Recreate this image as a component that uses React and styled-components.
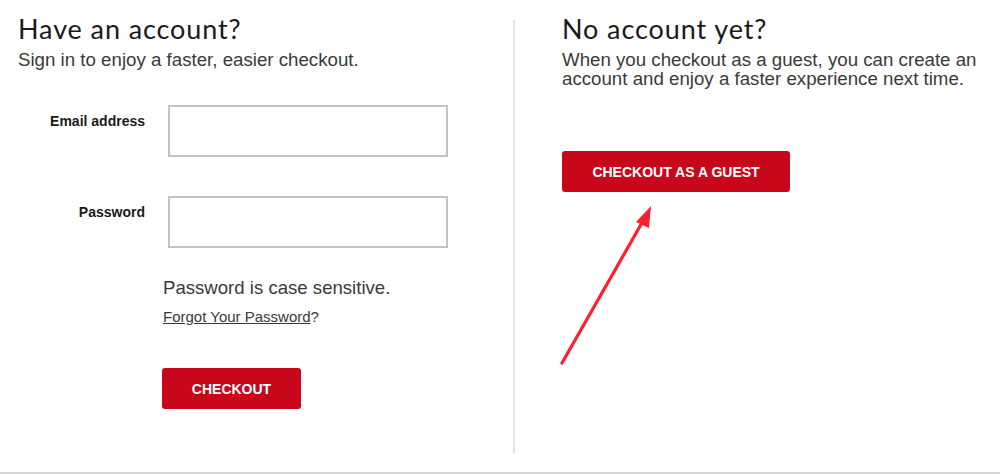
import React from 'react'
import styled, { createGlobalStyle } from 'styled-components';

const GlobalStyle = createGlobalStyle`
  html, body {
    margin: 0;
    padding: 0;
    background: #fff;
  }
  body {
    font-family: "Liberation Sans", Arial, sans-serif;
    color: #333;
  }
`;

const App = () => {
  return (
    <>
      <GlobalStyle />
      <Page>
        <Column>
          <Heading>Have an account?</Heading>
          <Lead>Sign in to enjoy a faster, easier checkout.</Lead>

          <Form onSubmit={(e) => e.preventDefault()}>
            <FieldRow>
              <Label htmlFor="email">Email address</Label>
              <Input id="email" type="email" />
            </FieldRow>
            <FieldRow>
              <Label htmlFor="password">Password</Label>
              <Input id="password" type="password" />
            </FieldRow>
          </Form>

          <Hint>Password is case sensitive.</Hint>
          <Forgot><a href="#">Forgot Your Password</a>?</Forgot>
          <Button type="button">Checkout</Button>
        </Column>

        <Divider />

        <Column $right>
          <Heading>No account yet?</Heading>
          <Lead>
            When you checkout as a guest, you can create an<br />
            account and enjoy a faster experience next time.
          </Lead>
          <Button $wide type="button">Checkout as a guest</Button>

          <Arrow width="110" height="175" viewBox="0 0 110 175">
            <line x1="8" y1="168" x2="89" y2="26" stroke="#ff1f2d" strokeWidth="3.2" strokeLinecap="round" />
            <polygon points="97,11 82,27 95,33" fill="#ff1f2d" />
          </Arrow>
        </Column>
      </Page>
    </>
  )
}

const Page = styled.div`
  display: flex;
  align-items: flex-start;
  height: 474px;
  padding-top: 14px;
  box-sizing: border-box;
  border-bottom: 2px solid #d6d6d6;
`;

const Column = styled.div`
  position: relative;
  box-sizing: border-box;
  width: ${({$right}) => $right ? '485px' : '513px'};
  padding-left: ${({$right}) => $right ? '47px' : '18px'};
`;

const Divider = styled.div`
  width: 2px;
  height: 433px;
  margin-top: 6px;
  background: #e2e2e2;
`;

const Heading = styled.h2`
  margin: 0;
  font-family: Lato, "Open Sans", sans-serif;
  font-weight: 400;
  font-size: 27px;
  line-height: 30px;
  letter-spacing: 0.9px;
  color: #1a1a1a;
`;

const Lead = styled.p`
  margin: 6px 0 0;
  font-size: 18.7px;
  line-height: 19px;
  color: #3a3a3a;
`;

const Form = styled.form`
  margin-top: 36px;
  display: flex;
  flex-direction: column;
  gap: 39px;
`;

const FieldRow = styled.div`
  display: grid;
  grid-template-columns: 127px 280px;
  column-gap: 23px;
  align-items: start;
`;

const Label = styled.label`
  padding-top: 8px;
  text-align: right;
  font-weight: 700;
  font-size: 14px;
  line-height: 16px;
  color: #1a1a1a;
`;

const Input = styled.input`
  box-sizing: border-box;
  width: 280px;
  height: 52px;
  margin: 0;
  padding: 0 10px;
  border: 2px solid #c3c3c3;
  background: #fff;
  font: inherit;
  outline: none;
`;

const Hint = styled.p`
  margin: 29px 0 0 145px;
  font-size: 18.6px;
  line-height: 22px;
  color: #3a3a3a;
`;

const Forgot = styled.p`
  margin: 9px 0 0 145px;
  font-size: 15px;
  line-height: 18px;
  color: #3a3a3a;
  a {
    color: #3a3a3a;
    text-decoration: underline;
  }
`;

const Button = styled.button`
  display: block;
  box-sizing: border-box;
  width: ${({$wide}) => $wide ? '228px' : '139px'};
  height: 41px;
  margin: ${({$wide}) => $wide ? '63px 0 0 0' : '42px 0 0 144px'};
  padding: 0;
  border: none;
  border-radius: 3px;
  background: #c8081a;
  color: #fff;
  font-family: "Liberation Sans", Arial, sans-serif;
  font-weight: 700;
  font-size: 14px;
  text-transform: uppercase;
  cursor: pointer;
`;

const Arrow = styled.svg`
  position: absolute;
  left: 39px;
  top: 181px;
`;

export default App
